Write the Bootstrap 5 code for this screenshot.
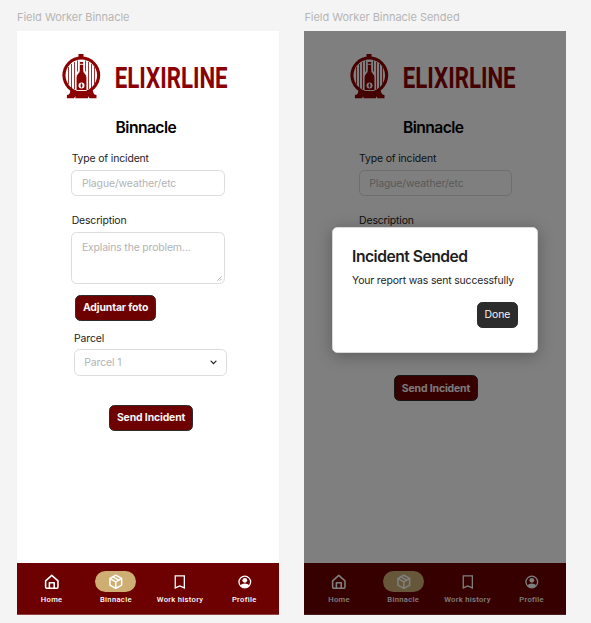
<!DOCTYPE html>
<html lang="en">
<head>
<meta charset="utf-8">
<meta name="viewport" content="width=device-width, initial-scale=1">
<title>Field Worker Binnacle</title>
<link href="https://cdn.jsdelivr.net/npm/bootstrap@5.3.0/dist/css/bootstrap.min.css" rel="stylesheet">
<style>
  body { background: #f4f4f4; font-family: Inter, "Liberation Sans", sans-serif; font-size: 10.43px; line-height: 14.6px; letter-spacing: -.15px; color: #1e1e1e; }
  .board { padding: 10px 0 0 17px; gap: 25.4px; height: 623px; overflow: hidden; }
  .frame { width: 262px; }
  .frame-name { font-size: 11px; line-height: 14px; letter-spacing: -.03px; color: #b5b5b5; margin-bottom: 7.4px; white-space: nowrap; }
  .screen { height: 583.2px; background: #fff; }
  .brand { height: 45px; margin: 22.4px 0 0 45.2px; gap: 14px; }
  .brand svg { overflow: visible; }
  .screen-title { font-size: 15.65px; line-height: 20px; font-weight: 600; letter-spacing: -.55px; color: #000; margin: 19px 0 0 98.6px; }
  .incident-form { margin: 14.2px 0 0 54.3px; width: 156px; }
  .field { width: 153.4px; margin-bottom: 18px; }
  .field-label { display: block; margin: 0 0 3.2px .4px; }
  .field .form-control, .field .form-select { font-size: 10.43px; line-height: 14.6px; letter-spacing: -.1px; border: 1px solid #dcdcdc; border-radius: 5.6px; padding: 5.2px 10px 4.8px 9.6px; min-height: 0; height: 26.4px; color: #b3b3b3; resize: none; background-color: #fff; }
  .field .form-control::placeholder { color: #b3b3b3; opacity: 1; }
  .field textarea.form-control { height: 52px; padding-top: 8px; letter-spacing: -.15px; overflow: hidden; display: block; }
  .field .form-select { background-image: none; padding-top: 5.6px; padding-left: 9.2px; padding-bottom: 4.4px; }
  .grip { right: 3px; bottom: 3px; }
  .caret { right: 9px; top: 9px; }
  .btn-wine { background: #6d0000; border: 1px solid #2c2c2c; color: #f5f5f5; font-size: 10.43px; line-height: 14px; letter-spacing: -.13px; font-weight: 700; border-radius: 5.4px; padding: 5.2px 0 4.2px; height: 25.8px; white-space: nowrap; }
  .btn-photo { margin: -7px 0 0 3.5px; width: 81.5px; }
  .parcel { margin: 10.8px 0 0 2.8px; }
  .parcel .field-label { margin-left: 0; }
  .btn-send { margin: 29.2px 0 0 37.8px; width: 84px; }
  .sent .btn-send { margin: 146.4px 0 0 35.3px; }
  .tabs { height: 51.3px; background: #6d0000; padding: 8px 2.6px 0; color: #fff; border-bottom: 1px solid #963f3f; }
  .tab { width: 64.2px; font-family: Roboto, "Liberation Sans", sans-serif; font-size: 7.6px; line-height: 10px; font-weight: 500; letter-spacing: .32px; white-space: nowrap; color: #fff; text-decoration: none; }
  .pill { width: 41px; height: 20.6px; margin-bottom: 2.8px; }
  .pill svg { margin: 0 0 0 .4px; }
  .pill-on { background: #cfae74; }
  .scrim { background: rgba(0,0,0,.5); }
  .dialog-box { left: 27.3px; top: 195.2px; width: 206.6px; height: 126.5px; padding: 20px 20.4px 0 20.4px; border: 1px solid #d9d9d9; border-radius: 5.2px; background: #fff; box-shadow: 0 3px 16px rgba(12,12,13,.3); }
  .dialog-title { font-size: 15.65px; line-height: 18.8px; font-weight: 600; letter-spacing: -.5px; margin: 0 0 7.4px -1px; }
  .dialog-text { margin: 0 -8px 13.8px -1px; white-space: nowrap; }
  .btn-done { background: #2c2c2c; border: 1px solid #2c2c2c; color: #f5f5f5; width: 41px; height: 25.6px; font-size: 10.43px; line-height: 14px; letter-spacing: -.1px; border-radius: 5.2px; padding: 5.2px 0 4.2px; margin-right: -1px; }
</style>
</head>
<body>
<svg width="0" height="0" class="position-absolute" aria-hidden="true">
  <symbol id="barrel" viewBox="0 0 40 45">
    <g fill="#8b0000">
      <path d="M16.500 0h5v4h-5zM8.500 36l22 0 1 3q.5 2 3 2v3.300h-7l-1.500-2v2h-12.600v-2l-1.500 2h-7V41q2.500 0 3-2z"/>
      <circle cx="19.300" cy="21.300" r="18.900"/>
    </g>
    <circle cx="19.300" cy="21.300" r="15.800" fill="#fff"/>
    <path stroke="#8b0000" stroke-width=".8" d="M6.500 13v17M9.500 10v24M12.500 8v27M15.500 6.500v11M23.500 6.500v11M26.500 8v27M29.500 10v24M32.500 13v17"/>
    <path fill="#8b0000" stroke="#fff" stroke-width=".9" d="M17.300 7.500h4.400v9q0 2 1.500 3.200 1.700 1.500 1.700 4v11.800q0 1-1 1h-8.800q-1 0-1-1V23.700q0-2.500 1.700-4 1.500-1.200 1.500-3.200z"/>
    <path stroke="#fff" stroke-width=".9" d="M17.300 10.300h4.400"/>
    <circle cx="19.500" cy="31.500" r="3" fill="#fff"/>
    <path fill="#8b0000" d="M19.500 29q2 2.500 0 5-2-2.500 0-5"/>
  </symbol>
  <symbol id="home" viewBox="0 0 24 24"><path fill="none" stroke="currentColor" stroke-width="2.400" stroke-linejoin="round" d="M2.500 10.500 12 2l9.500 8.500V20a2 2 0 0 1-2 2h-15a2 2 0 0 1-2-2zM8.300 22v-8.500h7.400V22"/></symbol>
  <symbol id="box" viewBox="0 0 24 24"><path fill="none" stroke="currentColor" stroke-width="2.300" stroke-linejoin="round" stroke-linecap="round" d="m12 1.800 9 5.100v10.200l-9 5.100-9-5.100V6.900zM3.300 7.200 12 12l8.700-4.800M12 12v10M7.500 4.400l9 5.100"/></symbol>
  <symbol id="bookmark" viewBox="0 0 24 24"><path fill="none" stroke="currentColor" stroke-width="2" d="M5 3h14v18.500L12 18.500l-7 3z"/></symbol>
  <symbol id="person" viewBox="0 0 24 24"><circle cx="12" cy="12.300" r="9" fill="none" stroke="currentColor" stroke-width="2"/><circle cx="12" cy="9.700" r="3.700" fill="currentColor"/><path fill="currentColor" d="M5 17.300q3-2.600 7-2.600t7 2.600q-2.500 4-7 4t-7-4"/></symbol>
</svg>

<main class="board d-flex">
  <section class="frame flex-shrink-0">
    <div class="frame-name">Field Worker Binnacle</div>
    <div class="screen d-flex flex-column position-relative">
      <div class="brand d-flex">
        <svg width="40" height="45"><use href="#barrel"/></svg>
        <svg width="116" height="45"><text x="-1.200" y="33.500" textLength="112.800" lengthAdjust="spacingAndGlyphs" letter-spacing="0" font-family="Roboto, sans-serif" font-weight="700" font-size="30" fill="#8b0000">ELIXIRLINE</text></svg>
      </div>
      <h1 class="screen-title">Binnacle</h1>
      <form class="incident-form">
        <div class="field">
          <label class="field-label" for="type1">Type of incident</label>
          <input class="form-control" id="type1" placeholder="Plague/weather/etc">
        </div>
        <div class="field">
          <label class="field-label" for="desc1">Description</label>
          <div class="position-relative">
            <textarea class="form-control" id="desc1" placeholder="Explains the problem..."></textarea>
            <svg class="grip position-absolute" width="5" height="5" viewBox="0 0 5 5"><path d="M.3 4.700 4.700.3M2.700 4.700l2-2" stroke="#999" stroke-width=".7"/></svg>
          </div>
        </div>
        <button type="button" class="btn btn-wine btn-photo d-block">Adjuntar foto</button>
        <div class="field parcel">
          <label class="field-label" for="parcel1">Parcel</label>
          <div class="position-relative">
            <select class="form-select" id="parcel1"><option>Parcel 1</option></select>
            <svg class="caret position-absolute" width="9" height="9" viewBox="0 0 9 9"><path d="m2 3.200 2.500 2.500L7 3.200" fill="none" stroke="#1e1e1e" stroke-width="1.200" stroke-linecap="round"/></svg>
          </div>
        </div>
        <button type="button" class="btn btn-wine btn-send d-block">Send Incident</button>
      </form>
      <nav class="tabs d-flex mt-auto">
        <a class="tab d-flex flex-column align-items-center"><span class="pill d-flex align-items-center justify-content-center"><svg width="15.600" height="15.600"><use href="#home"/></svg></span>Home</a>
        <a class="tab d-flex flex-column align-items-center"><span class="pill pill-on rounded-pill d-flex align-items-center justify-content-center"><svg width="15.600" height="15.600"><use href="#box"/></svg></span>Binnacle</a>
        <a class="tab d-flex flex-column align-items-center"><span class="pill d-flex align-items-center justify-content-center"><svg width="15.600" height="15.600"><use href="#bookmark"/></svg></span>Work history</a>
        <a class="tab d-flex flex-column align-items-center"><span class="pill d-flex align-items-center justify-content-center"><svg width="15.600" height="15.600"><use href="#person"/></svg></span>Profile</a>
      </nav>
    </div>
  </section>

  <section class="frame flex-shrink-0">
    <div class="frame-name">Field Worker Binnacle Sended</div>
    <div class="screen sent d-flex flex-column position-relative">
      <div class="brand d-flex">
        <svg width="40" height="45"><use href="#barrel"/></svg>
        <svg width="116" height="45"><text x="-1.200" y="33.500" textLength="112.800" lengthAdjust="spacingAndGlyphs" letter-spacing="0" font-family="Roboto, sans-serif" font-weight="700" font-size="30" fill="#8b0000">ELIXIRLINE</text></svg>
      </div>
      <h1 class="screen-title">Binnacle</h1>
      <form class="incident-form">
        <div class="field">
          <label class="field-label" for="type2">Type of incident</label>
          <input class="form-control" id="type2" placeholder="Plague/weather/etc">
        </div>
        <div class="field-label mb-0">Description</div>
        <button type="button" class="btn btn-wine btn-send d-block">Send Incident</button>
      </form>
      <nav class="tabs d-flex mt-auto">
        <a class="tab d-flex flex-column align-items-center"><span class="pill d-flex align-items-center justify-content-center"><svg width="15.600" height="15.600"><use href="#home"/></svg></span>Home</a>
        <a class="tab d-flex flex-column align-items-center"><span class="pill pill-on rounded-pill d-flex align-items-center justify-content-center"><svg width="15.600" height="15.600"><use href="#box"/></svg></span>Binnacle</a>
        <a class="tab d-flex flex-column align-items-center"><span class="pill d-flex align-items-center justify-content-center"><svg width="15.600" height="15.600"><use href="#bookmark"/></svg></span>Work history</a>
        <a class="tab d-flex flex-column align-items-center"><span class="pill d-flex align-items-center justify-content-center"><svg width="15.600" height="15.600"><use href="#person"/></svg></span>Profile</a>
      </nav>
      <div class="scrim position-absolute top-0 start-0 w-100 h-100">
        <div class="dialog-box position-absolute" role="dialog">
          <h2 class="dialog-title">Incident Sended</h2>
          <p class="dialog-text">Your report was sent successfully</p>
          <div class="d-flex justify-content-end"><button type="button" class="btn btn-done">Done</button></div>
        </div>
      </div>
    </div>
  </section>
</main>
<script src="https://cdn.jsdelivr.net/npm/bootstrap@5.3.0/dist/js/bootstrap.bundle.min.js"></script>
</body>
</html>
